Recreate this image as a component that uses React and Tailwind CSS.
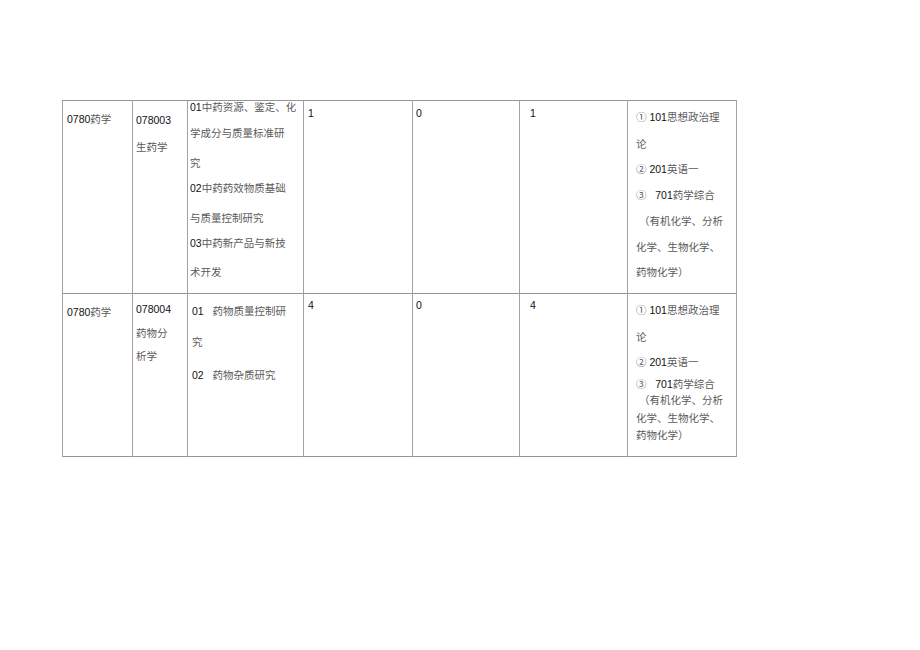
import React from "react";

// split a line so ascii digits render dark and CJK text renders gray
function Line({ text, className = "" }) {
  const parts = text.split(/([0-9]+)/);
  return (
    <div className={`h-[12px] leading-[12px] whitespace-pre ${className}`}>
      {parts.map((p, i) =>
        /^[0-9]+$/.test(p) ? (
          <span key={i} className="text-[#111]">
            {p}
          </span>
        ) : (
          <span key={i} className="text-[#5a5a5a]">
            {p}
          </span>
        )
      )}
    </div>
  );
}

const cellBase = "border-l border-t border-l-[#a89fab] border-t-[#8e988e]";

export default function App() {
  return (
    <div className="w-[920px] h-[650px] bg-white font-['Liberation_Sans','Noto_Sans_CJK_SC',sans-serif] text-[10.5px]">
      <div className="pt-[100px] pl-[62px]">
        <div className="grid w-[675px] grid-cols-[70px_55px_116px_109px_107px_108px_110px] grid-rows-[193px_164px]">
          {/* Row 1 */}
          <div className={`${cellBase} pl-[4px] pt-[12px]`}>
            <Line text="0780药学" />
          </div>
          <div className={`${cellBase} pl-[3px] pt-[13px]`}>
            <Line text="078003" />
            <Line text="生药学" className="mt-[15px]" />
          </div>
          <div className={`${cellBase} pl-[2px] pt-[0px]`}>
            <Line text="01中药资源、鉴定、化" />
            <Line text="学成分与质量标准研" className="mt-[14px]" />
            <Line text="究" className="mt-[18px]" />
            <Line text="02中药药效物质基础" className="mt-[13px]" />
            <Line text="与质量控制研究" className="mt-[18px]" />
            <Line text="03中药新产品与新技" className="mt-[13px]" />
            <Line text="术开发" className="mt-[17px]" />
          </div>
          <div className={`${cellBase} pl-[4px] pt-[6px]`}>
            <Line text="1" />
          </div>
          <div className={`${cellBase} pl-[3px] pt-[6px]`}>
            <Line text="0" />
          </div>
          <div className={`${cellBase} pl-[10px] pt-[6px]`}>
            <Line text="1" />
          </div>
          <div className={`${cellBase} border-r border-r-[#a89fab] pl-[8px] pt-[10px]`}>
            <Line text="① 101思想政治理" />
            <Line text="论" className="mt-[15px]" />
            <Line text="② 201英语一" className="mt-[13px]" />
            <Line text="③   701药学综合" className="mt-[14px]" />
            <Line text=" （有机化学、分析" className="mt-[14px]" />
            <Line text="化学、生物化学、" className="mt-[14px]" />
            <Line text="药物化学）" className="mt-[13px]" />
          </div>

          {/* Row 2 */}
          <div className={`${cellBase} border-b border-b-[#8e988e] pl-[4px] pt-[12px]`}>
            <Line text="0780药学" />
          </div>
          <div className={`${cellBase} border-b border-b-[#8e988e] pl-[3px] pt-[9px]`}>
            <Line text="078004" />
            <Line text="药物分" className="mt-[12px]" />
            <Line text="析学" className="mt-[11px]" />
          </div>
          <div className={`${cellBase} border-b border-b-[#8e988e] pl-[4px] pt-[11px]`}>
            <Line text="01   药物质量控制研" />
            <Line text="究" className="mt-[19px]" />
            <Line text="02   药物杂质研究" className="mt-[21px]" />
          </div>
          <div className={`${cellBase} border-b border-b-[#8e988e] pl-[4px] pt-[5px]`}>
            <Line text="4" />
          </div>
          <div className={`${cellBase} border-b border-b-[#8e988e] pl-[3px] pt-[5px]`}>
            <Line text="0" />
          </div>
          <div className={`${cellBase} border-b border-b-[#8e988e] pl-[10px] pt-[5px]`}>
            <Line text="4" />
          </div>
          <div className={`${cellBase} border-b border-b-[#8e988e] border-r border-r-[#a89fab] pl-[8px] pt-[10px]`}>
            <Line text="① 101思想政治理" />
            <Line text="论" className="mt-[15px]" />
            <Line text="② 201英语一" className="mt-[13px]" />
            <Line text="③   701药学综合" className="mt-[10px]" />
            <Line text=" （有机化学、分析" className="mt-[4px]" />
            <Line text="化学、生物化学、" className="mt-[6px]" />
            <Line text="药物化学）" className="mt-[5px]" />
          </div>
        </div>
      </div>
    </div>
  );
}
